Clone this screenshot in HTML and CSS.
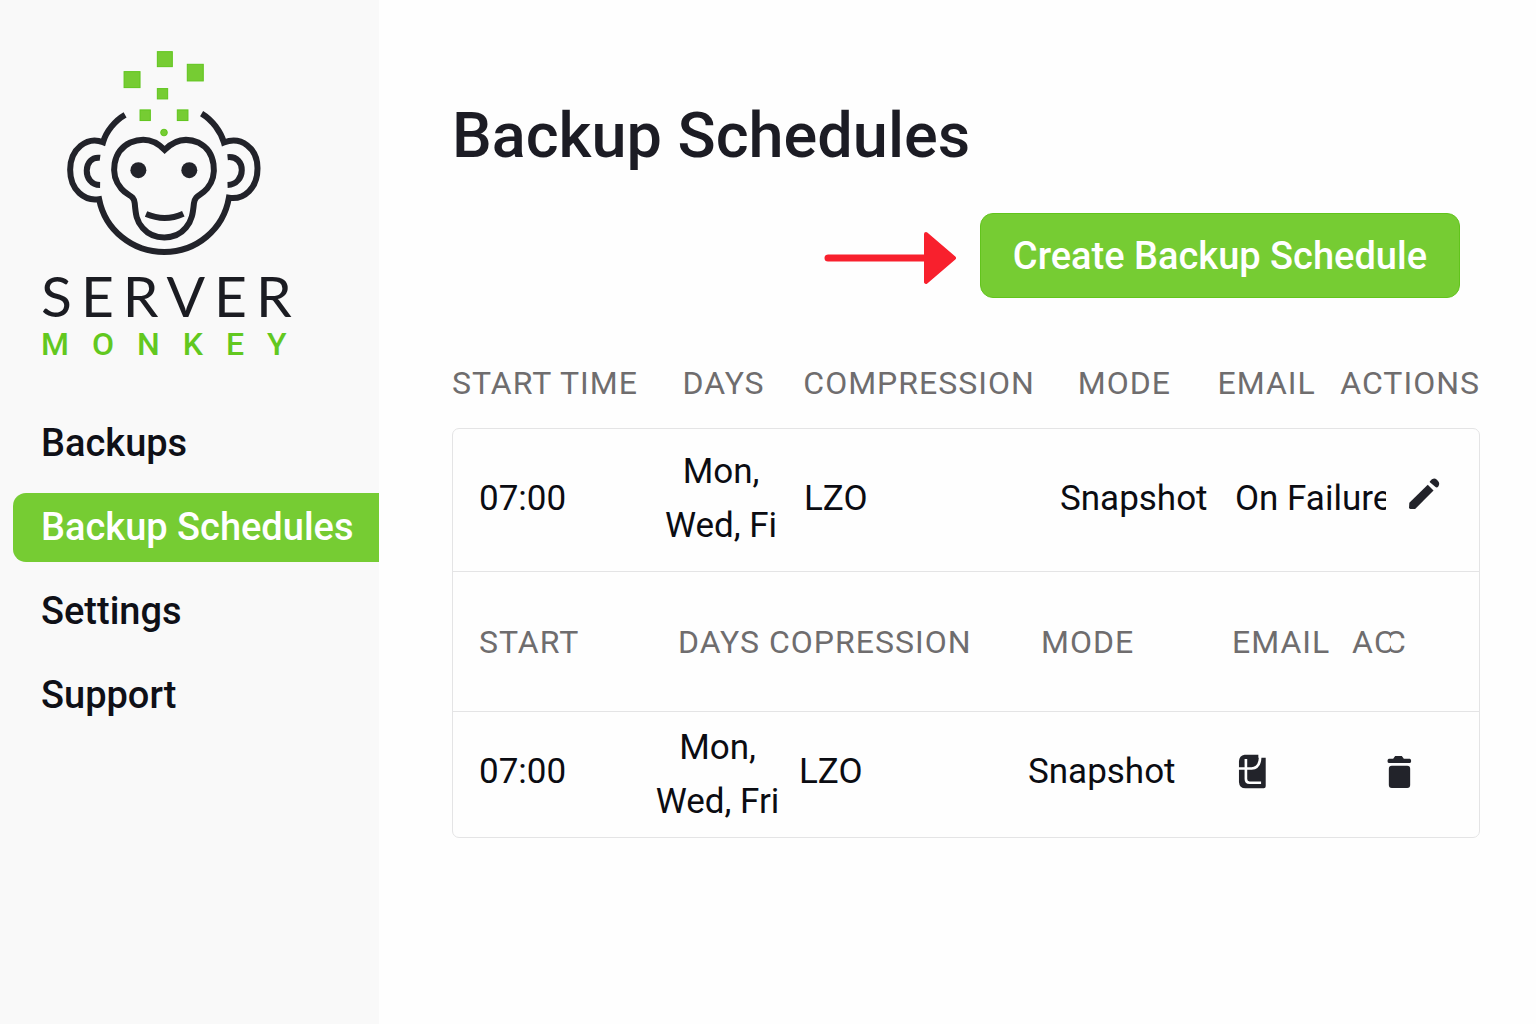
FILE: index.html
```html
<!DOCTYPE html>
<html lang="en">
<head>
    <meta charset="UTF-8">
    <meta name="viewport" content="width=device-width, initial-scale=1.0">
    <title>Backup Schedules - Server Monkey</title>
    <link rel="stylesheet" href="styles.css">
</head>
<body>
    <div class="layout">
        <aside class="sidebar">
            <div class="logo">
                <svg class="logo-mark" viewBox="100 20 600 640" aria-hidden="true">
                    <g fill="#76cc33" stroke="#5fc51c" stroke-width="3">
                        <rect x="383" y="34" width="45" height="45"/>
                        <rect x="473" y="72" width="48" height="50"/>
                        <rect x="283" y="94" width="48" height="48"/>
                        <rect x="383" y="145" width="31" height="31"/>
                        <rect x="331" y="209" width="31" height="32"/>
                        <rect x="443" y="209" width="32" height="32"/>
                        <circle cx="403" cy="277" r="10"/>
                    </g>
                    <g fill="none" stroke="#22232a" stroke-width="18">
                        <path d="M286 224C256 241 229 274 220 306C172 287 121 326 121 389C121 451 165 484 208 477C226 570 308 636 404 636C501 636 582 567 598 473C644 480 684 444 684 384C684 324 635 287 583 307C574 275 548 239 516 220"/>
                        <path d="M211 353C159 346 156 434 211 435M594 351C652 345 650 433 594 435"/>
                        <path d="M405 329C374 297 337 292 302 307C249 332 238 403 275 446C294 469 312 463 315 489C318 524 320 543 339 564C372 602 437 602 469 563C487 542 490 519 493 489C497 463 514 468 533 445C565 406 559 334 508 308C470 291 434 300 405 329Z"/>
                        <path d="M349 522C385 537 426 537 461 521"/>
                    </g>
                    <g fill="#22232a">
                        <circle cx="326" cy="390" r="24"/>
                        <circle cx="479" cy="390" r="24"/>
                    </g>
                </svg>
                <div class="logo-server">SERVER</div>
                <div class="logo-monkey">MONKEY</div>
            </div>
            <nav class="nav">
                <a href="#backups">Backups</a>
                <a href="#schedules" class="active" aria-current="page">Backup Schedules</a>
                <a href="#settings">Settings</a>
                <a href="#support">Support</a>
            </nav>
        </aside>

        <main class="content">
            <h1>Backup Schedules</h1>

            <div class="toolbar">
                <svg class="arrow" viewBox="0 0 134 54" aria-hidden="true">
                    <path d="M5 27H108" stroke="#f8202d" stroke-width="7" stroke-linecap="round"/>
                    <path d="M103 3L131 27L103 51Z" fill="#f8202d" stroke="#f8202d" stroke-width="4" stroke-linejoin="round"/>
                </svg>
                <button type="button" class="btn-create">Create Backup Schedule</button>
            </div>

            <table class="schedules">
                <thead>
                    <tr class="row-head">
                        <th>START TIME</th>
                        <th>DAYS</th>
                        <th>COMPRESSION</th>
                        <th>MODE</th>
                        <th>EMAIL</th>
                        <th>ACTIONS</th>
                    </tr>
                </thead>
                <tbody>
                    <tr class="row-first">
                        <td>07:00</td>
                        <td class="days">Mon,<br>Wed, Fi</td>
                        <td class="compression">LZO</td>
                        <td>Snapshot</td>
                        <td class="email">On Failure</td>
                        <td class="actions">
                            <button type="button" class="btn-icon" aria-label="Edit">
                                <svg class="icon-edit" viewBox="206 26 94 94" aria-hidden="true">
                                    <path d="M210 99L264 46L281 63L227 117H213Q209 117 209 113Z" fill="#22232a"/>
                                    <path d="M270 36Q280 22 291 31Q302 41 295 51Q291 56 286 52L272 40Q269 38 270 36Z" fill="#22232a"/>
                                </svg>
                            </button>
                        </td>
                    </tr>
                    <tr class="row-sub">
                        <th>START</th>
                        <th>DAYS</th>
                        <th>COPRESSION</th>
                        <th>MODE</th>
                        <th>EMAIL</th>
                        <th>A<span class="cut-right">C</span><span class="cut-left">C</span></th>
                    </tr>
                    <tr class="row-last">
                        <td>07:00</td>
                        <td class="days">Mon,<br>Wed, Fri</td>
                        <td class="compression">LZO</td>
                        <td>Snapshot</td>
                        <td class="email">
                            <svg class="icon-email" viewBox="54 42 86 106" aria-hidden="true">
                                <path d="M73 44H115V53H137V140Q137 146 131 146H76Q57 146 56 127V64Q57 46 73 44Z" fill="#22232a"/>
                                <path d="M77 57V118Q77 129 88 129H123M54 86H94Q119 84 120 54V42" fill="none" stroke="#fff" stroke-width="8"/>
                            </svg>
                        </td>
                        <td class="actions">
                            <button type="button" class="btn-icon" aria-label="Delete">
                                <svg class="icon-delete" viewBox="502 42 74 102" aria-hidden="true">
                                    <path d="M507 53H520L526 45H546L552 53H570Q574 54 574 60Q574 66 570 66H507Q503 66 503 60Q503 54 507 53Z" fill="#22232a"/>
                                    <rect x="507" y="74" width="64" height="67" rx="9" fill="#22232a"/>
                                </svg>
                            </button>
                        </td>
                    </tr>
                </tbody>
            </table>
        </main>
    </div>
</body>
</html>
```

FILE: styles.css
```css
* {
    box-sizing: border-box;
}
body {
    margin: 0;
    font-family: Roboto, "Liberation Sans", sans-serif;
    font-size: 35px;
    color: #0b0c12;
    background: #fefefe;
}
.layout {
    display: flex;
    min-height: 100vh;
}

/* sidebar */
.sidebar {
    flex: 0 0 379px;
    background: #f9f9f9;
    padding-top: 47px;
}
.logo {
    padding-left: 41px;
}
.logo-mark {
    display: block;
    width: 200px;
    height: 213px;
    margin-left: 22px;
}
.logo-server {
    font-family: Lato, sans-serif;
    font-size: 57px;
    font-weight: 400;
    line-height: 58px;
    letter-spacing: 9px;
    margin-top: 6px;
    color: #1b1c22;
}
.logo-monkey {
    font-size: 32px;
    font-weight: 500;
    line-height: 40px;
    letter-spacing: 23px;
    color: #62c81f;
}
.nav {
    display: flex;
    flex-direction: column;
    gap: 15px;
    margin-top: 45px;
    padding-left: 13px;
}
.nav a {
    padding-left: 28px;
    font-size: 38px;
    font-weight: 500;
    line-height: 69px;
    color: #0f1017;
    text-decoration: none;
    white-space: nowrap;
}
.nav a.active {
    background: #76cc33;
    border-radius: 13px 0 0 13px;
    color: #fff;
}

/* content */
.content {
    flex: 1;
    min-width: 0;
    padding: 100px 56px 40px 73px;
}
h1 {
    margin: 0;
    font-size: 63px;
    font-weight: 500;
    line-height: 72px;
    color: #1c1c24;
}
.toolbar {
    display: flex;
    justify-content: flex-end;
    align-items: center;
    gap: 23px;
    margin-top: 41px;
    padding-right: 20px;
}
.arrow {
    width: 134px;
    height: 54px;
    margin-top: 5px;
}
.btn-create {
    padding: 2px 32px 0;
    font-family: inherit;
    font-size: 38px;
    font-weight: 500;
    line-height: 81px;
    color: #fff;
    background: #76cc33;
    border: 1px solid #62c41c;
    border-radius: 13px;
    white-space: nowrap;
    cursor: pointer;
}

/* table, every row has its own columns */
.schedules,
.schedules thead,
.schedules tbody {
    display: block;
}
.schedules {
    margin-top: 60px;
}
.schedules tbody {
    border: 1px solid #e4e4e5;
    border-radius: 7px;
}
.schedules tr {
    display: grid;
    align-items: center;
}
.schedules th,
.schedules td {
    padding: 0;
    text-align: left;
    white-space: nowrap;
}
.schedules th {
    font-size: 32px;
    font-weight: 400;
    line-height: 50px;
    letter-spacing: 1px;
    color: #6f6d6e;
}
.schedules td {
    line-height: 54px;
}
.row-head {
    grid-template-columns: 231fr 121fr 275fr 140fr 123fr 138fr;
    padding-bottom: 20px;
}
.row-first,
.row-sub,
.row-last {
    padding-left: 26px;
}
.row-first {
    grid-template-columns: 182fr 120fr 279fr 175fr 151fr 93fr;
    min-height: 142px;
    padding-bottom: 2px;
}
.row-sub {
    grid-template-columns: 199fr 91fr 272fr 191fr 120fr 127fr;
    min-height: 141px;
    border-top: 1px solid #e4e4e5;
    border-bottom: 1px solid #e4e4e5;
}
.row-last {
    grid-template-columns: 175fr 127fr 247fr 208fr 127fr 116fr;
    min-height: 125px;
}
.schedules .days {
    text-align: center;
}
.row-first .compression {
    padding-left: 23px;
}
.row-first .email {
    overflow: hidden;
}
.row-first .actions {
    padding-left: 22px;
}
.row-last td:not(.days) {
    padding-bottom: 6px;
}
.row-last .compression {
    padding-left: 18px;
}
.row-last .email {
    padding-left: 2px;
}
.row-last .actions {
    display: flex;
    padding-left: 24px;
}
.cut-right,
.cut-left {
    display: inline-block;
    overflow: hidden;
    vertical-align: top;
}
.cut-right {
    width: 17px;
}
.cut-left {
    text-indent: -6px;
}
.btn-icon {
    padding: 0;
    background: none;
    border: 0;
    cursor: pointer;
}
.btn-icon svg,
.icon-email {
    display: block;
}
.icon-edit {
    width: 32px;
    height: 32px;
}
.icon-email {
    width: 29px;
    height: 35px;
}
.icon-delete {
    width: 25px;
    height: 34px;
}
```
